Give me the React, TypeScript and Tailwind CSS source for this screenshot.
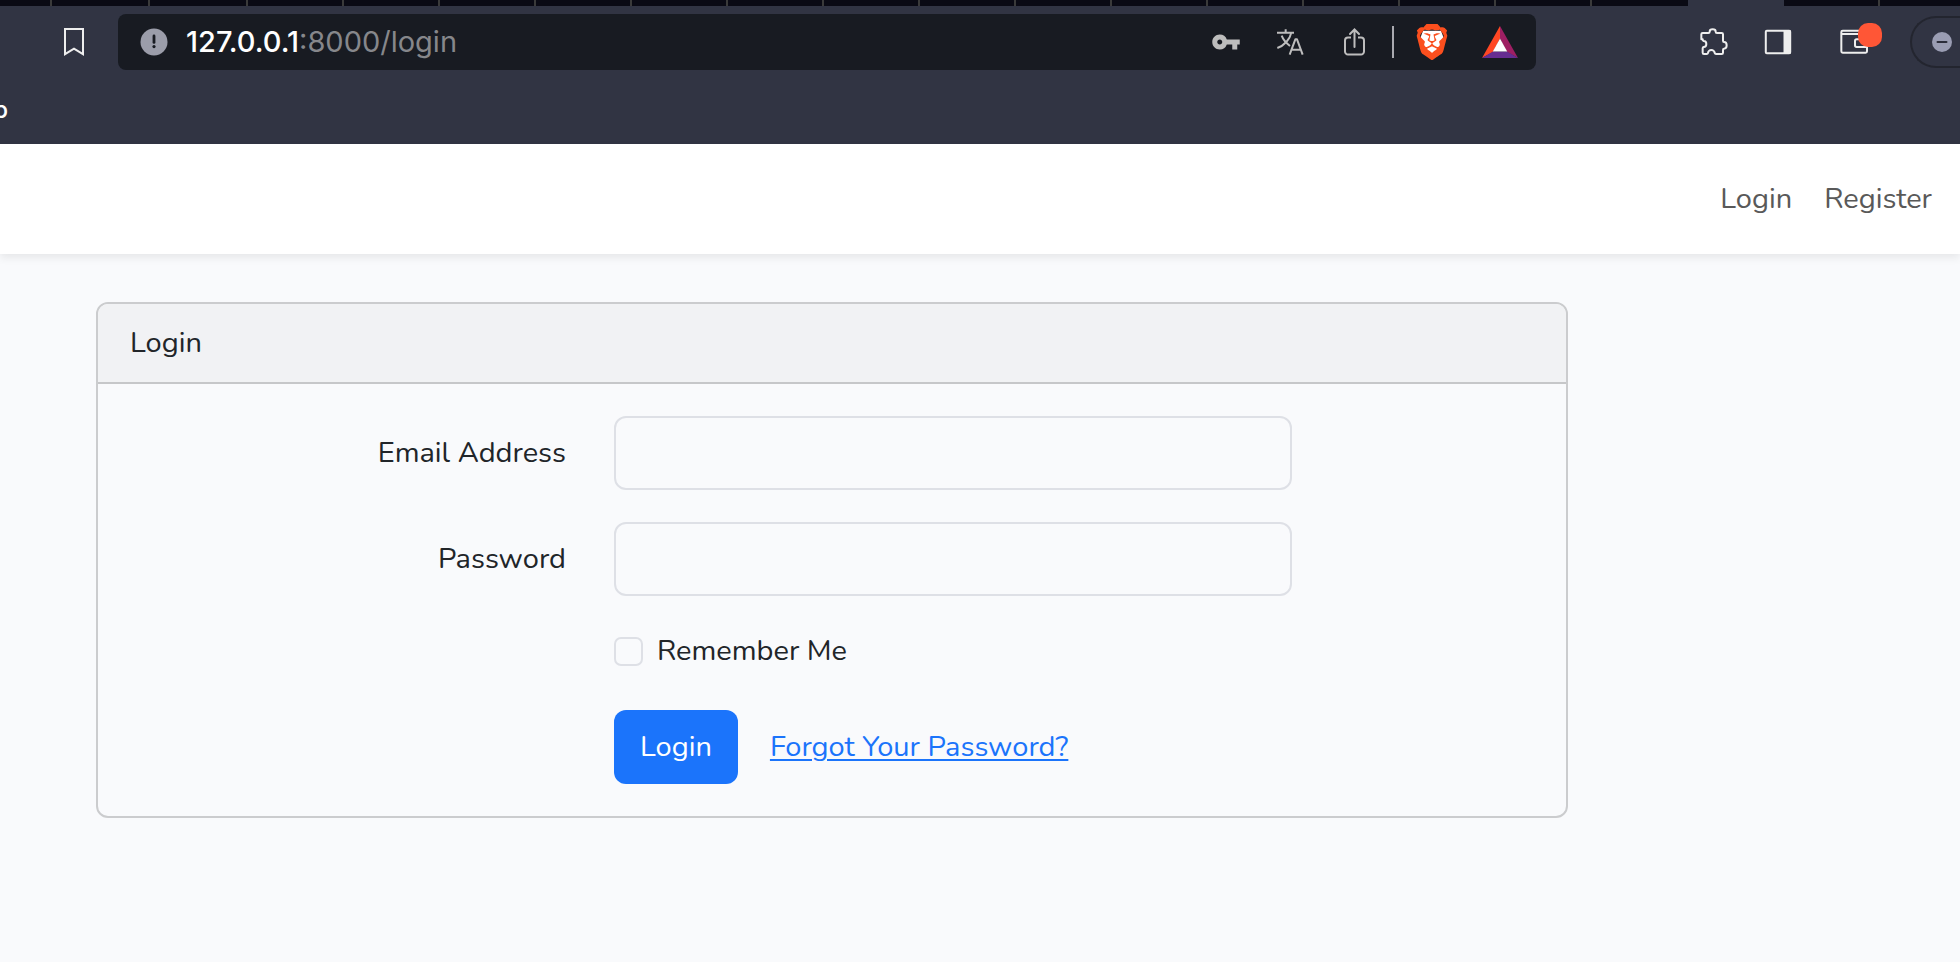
import type { ReactNode } from "react";
import { MdVpnKey } from "react-icons/md";
import { SiBrave } from "react-icons/si";

const tabs: string[] = [
  "w-[52px] border-r-2",
  "w-[98px] border-r-2",
  "w-[98px] border-r-2",
  ...Array<string>(14).fill("w-24 border-r-2"),
  "w-24",
  "w-24 bg-[#313443]",
  "w-24 border-r-2",
];

function IconButton({ label, className = "", children }: { label: string; className?: string; children: ReactNode }) {
  return (
    <button type="button" aria-label={label} className={`flex shrink-0 items-center justify-center ${className}`}>
      {children}
    </button>
  );
}

function BookmarkIcon() {
  return (
    <svg viewBox="0 0 20 28" className="h-7 w-5" fill="none" stroke="#eeeeee" strokeWidth="2">
      <path d="M1 1h18v25.2l-9-5.6-9 5.6z" />
    </svg>
  );
}

function InfoIcon() {
  return (
    <svg viewBox="0 0 28 28" className="h-7 w-7">
      <circle cx="14" cy="14" r="13.5" fill="#9b9daa" />
      <path d="M14 8v6.4" stroke="#181b22" strokeWidth="2.8" strokeLinecap="round" />
      <circle cx="14" cy="18.6" r="1.6" fill="#181b22" />
    </svg>
  );
}

function TranslateIcon() {
  return (
    <svg viewBox="288 88 84 84" className="h-7 w-7" fill="none" stroke="#bdbdbd" strokeWidth="6">
      <path d="M291 102h51M317 92v10M334 102c-4 20-22 39-42 46M305 111c4 11 12 21 25 31" />
      <path d="M329 168l17-46h5l17 46M335 153h27" strokeLinejoin="round" />
    </svg>
  );
}

function ShareIcon() {
  return (
    <svg viewBox="0 0 22 28" className="h-7 w-[22px]" fill="none" stroke="#bdbdbd" strokeWidth="2">
      <path d="M7 9.500H4A3 3 0 0 0 1 12.500v11a3 3 0 0 0 3 3h13a3 3 0 0 0 3-3v-11a3 3 0 0 0-3-3h-3" />
      <path d="M10.500 19V1.800M6 6l4.500-4.500L15 6" strokeLinecap="round" />
    </svg>
  );
}

function BraveLogo() {
  return (
    <span className="grid place-items-center">
      <svg viewBox="0 0 24 24" className="col-start-1 row-start-1 h-9 w-9">
        <path d="M6 4.500h12l1.500 4-2 8L12 20.500 6.500 16.500l-2-8z" fill="#ffffff" />
      </svg>
      <SiBrave className="col-start-1 row-start-1 h-9 w-9 text-[#fb4f1e]" />
    </span>
  );
}

function BatLogo() {
  return (
    <svg viewBox="0 0 36 32" className="h-8 w-9">
      <path d="M18 0v12.500L11 26 0 32z" fill="#ff4724" />
      <path d="M18 0l18 32-11-6-7-13.500z" fill="#9e1f63" />
      <path d="M0 32l11-6.500h14L36 32z" fill="#662d91" />
      <path d="M18 12.500 25.200 25.500H10.800z" fill="#ffffff" />
    </svg>
  );
}

function PuzzleIcon() {
  return (
    <svg viewBox="180 84 84 84" className="h-7 w-7" fill="none" stroke="#eeeeee" strokeWidth="6" strokeLinejoin="round">
      <path d="M184 118v-15q0-4 4-4h17q4 0 4-4a9 7 0 0 1 18 0q0 4 4 4h14q4 0 4 4v19q0 4 3 4a8 10 0 0 1 0 20q-3 0-3 4v8q0 4-4 4h-17q-3 0-4-3a10 9 0 0 0-20 0q-1 3-4 3h-8q-4 0-4-4v-13q0-3 3-4a8 9 0 0 0 0-18q-3-1-3-5z" />
    </svg>
  );
}

function PanelIcon() {
  return (
    <svg viewBox="0 0 28 26" className="h-[26px] w-7">
      <rect x="1.800" y="1.800" width="24.400" height="22.400" rx="1" fill="none" stroke="#eeeeee" strokeWidth="2" />
      <path d="M19.500 1h6.500l1 1v22l-1 1h-6.500z" fill="#eeeeee" />
    </svg>
  );
}

function WalletIcon() {
  return (
    <svg viewBox="600 88 84 78" className="h-[26px] w-7" fill="none" stroke="#eeeeee" strokeWidth="6">
      <path d="M681 118V96q0-3-3-3h-70q-4 0-4 4v58q0 4 4 4h69q4 0 4-4v-12M604 103h77" />
      <path d="M684 119h-34q-5 0-5 5v13q0 5 5 5h34" />
    </svg>
  );
}

function BrowserChrome() {
  return (
    <header className="bg-[#313443] font-[Inter,sans-serif]">
      <div className="flex h-1.5 overflow-hidden bg-[#0a0a14]">
        {tabs.map((style, i) => (
          <div key={i} className={`shrink-0 border-[#3a3a3a] ${style}`} />
        ))}
      </div>
      <div className="flex items-center overflow-hidden pt-2">
        <IconButton label="Bookmark this page" className="ml-16">
          <BookmarkIcon />
        </IconButton>
        <div className="ml-[34px] flex h-14 min-w-0 flex-1 items-center rounded-lg bg-[#181b22] pr-[18px] pl-[22px]">
          <IconButton label="View site information">
            <InfoIcon />
          </IconButton>
          <p className="ml-[18px] flex-1 truncate text-[29px] leading-10 text-[#86878b]">
            <span className="font-medium text-white">127.0.0.1</span>:8000/login
          </p>
          <IconButton label="Manage passwords" className="text-[#bdbdbd]">
            <MdVpnKey className="h-[30px] w-[30px]" />
          </IconButton>
          <IconButton label="Translate this page" className="ml-[35px]">
            <TranslateIcon />
          </IconButton>
          <IconButton label="Share this page" className="ml-10">
            <ShareIcon />
          </IconButton>
          <span className="ml-[26px] h-8 w-0.5 bg-[#a9aab0]" />
          <IconButton label="Brave Shields" className="ml-5">
            <BraveLogo />
          </IconButton>
          <IconButton label="Brave Rewards" className="ml-8">
            <BatLogo />
          </IconButton>
        </div>
        <IconButton label="Extensions" className="ml-[164px]">
          <PuzzleIcon />
        </IconButton>
        <IconButton label="Show sidebar" className="ml-9">
          <PanelIcon />
        </IconButton>
        <IconButton label="Wallet" className="relative ml-12">
          <WalletIcon />
          <span className="absolute -top-1.5 left-[18px] h-6 w-6 rounded-[10px] bg-[#ff5636]" />
        </IconButton>
        <IconButton label="Profile" className="ml-[42px] h-[52px] w-[50px] rounded-l-full border-2 border-r-0 border-[#23252f]">
          <svg viewBox="0 0 20 20" className="ml-3 h-5 w-5">
            <circle cx="10" cy="10" r="10" fill="#9a9db3" />
            <path d="M5.500 10h9" stroke="#2b2d3a" strokeWidth="2" strokeLinecap="round" />
          </svg>
        </IconButton>
      </div>
      <div className="flex h-[74px] items-center pt-1.5">
        <button type="button" className="flex w-2 justify-end overflow-hidden text-2xl font-medium text-white">
          p
        </button>
      </div>
    </header>
  );
}

function TextField({ id, label, type }: { id: string; label: string; type: string }) {
  return (
    <div className="-mx-6 mb-8 grid grid-cols-12">
      <label htmlFor={id} className="col-span-4 flex items-center justify-end px-6">
        {label}
      </label>
      <div className="col-span-6 px-6">
        <input
          id={id}
          name={id}
          type={type}
          className="block h-[74px] w-full rounded-xl border-2 border-[#dee0e6] bg-transparent px-6 outline-none focus:border-[#86b7fe]"
        />
      </div>
    </div>
  );
}

export default function App() {
  return (
    <div className="min-h-screen bg-[#f9fafc] font-[Nunito,Lato,sans-serif] text-[29px] leading-[46px] text-[#212529]">
      <BrowserChrome />
      <nav className="flex h-[110px] items-center justify-end gap-8 bg-white pr-7 text-[#595959] shadow-[0_4px_8px_rgba(0,0,0,0.075)]">
        <a href="/login">Login</a>
        <a href="/register">Register</a>
      </nav>
      <main className="py-12 pr-[392px] pl-24">
        <section className="rounded-xl border-2 border-[#cbccce]">
          <h1 className="rounded-t-[10px] border-b-2 border-[#c6c7c9] bg-[#f1f2f4] px-8 py-4">Login</h1>
          <form className="p-8" onSubmit={(e) => e.preventDefault()}>
            <TextField id="email" label="Email Address" type="email" />
            <TextField id="password" label="Password" type="password" />
            <div className="-mx-6 mb-9 grid grid-cols-12">
              <div className="col-span-6 col-start-5 flex items-center px-6">
                <input
                  id="remember"
                  name="remember"
                  type="checkbox"
                  className="h-[29px] w-[29px] appearance-none rounded-[7px] border-2 border-[#dee0e6] checked:border-[#1b74fb] checked:bg-[#1b74fb]"
                />
                <label htmlFor="remember" className="pl-3.5">
                  Remember Me
                </label>
              </div>
            </div>
            <div className="-mx-6 grid grid-cols-12">
              <div className="col-span-8 col-start-5 flex items-center px-6">
                <button type="submit" className="h-[74px] rounded-xl bg-[#1b74fb] px-[26px] text-white">
                  Login
                </button>
                <a href="/password/reset" className="ml-8 text-[#1b74fb] underline decoration-2 underline-offset-[3px]">
                  Forgot Your Password?
                </a>
              </div>
            </div>
          </form>
        </section>
      </main>
    </div>
  );
}
